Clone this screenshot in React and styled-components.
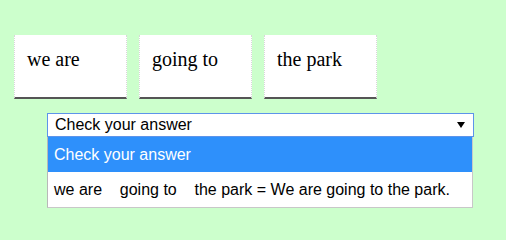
import React from "react";
import styled, { createGlobalStyle } from "styled-components";

const Global = createGlobalStyle`
  html, body { margin: 0; padding: 0; background: #ccffcc; }
  * { box-sizing: border-box; }
`;

const Page = styled.div`
  min-height: 234px;
  background: #ccffcc;
  padding: 35px 0 0 14px;
`;

const WordRow = styled.div`
  display: flex;
  gap: 12px;
`;

const WordCard = styled.div`
  width: 113px;
  height: 64px;
  background: #ffffff;
  border-left: 1px dotted #d8d8d8;
  border-right: 1px dotted #d8d8d8;
  border-bottom: 2px solid #555555;
  padding: 13px 12px 0 12px;
  font-family: "Liberation Serif", "Times New Roman", serif;
  font-size: 20px;
  color: #000;
  line-height: normal;
`;

const AnswerArea = styled.div`
  margin: 14px 0 0 33px;
  width: 427px;
  font-family: "Liberation Sans", Arial, sans-serif;
  font-size: 16px;
`;

const SelectBox = styled.div`
  height: 24px;
  border: 1px solid #5d94ea;
  background: #fff;
  display: flex;
  align-items: center;
  justify-content: space-between;
  padding: 0 8px 0 7px;
  color: #000;
`;

const OptionList = styled.div`
  width: 426px;
  border-left: 1px solid #b8b8b8;
  border-right: 1px solid #c8c8c8;
  border-bottom: 1px solid #c8c8c8;
  background: #fff;
`;

const Option = styled.div`
  height: 35px;
  display: flex;
  align-items: center;
  padding-left: 6px;
  white-space: pre;
  background: ${(p) => (p.$selected ? "#2e90fb" : "#ffffff")};
  color: ${(p) => (p.$selected ? "#ffffff" : "#000000")};
`;

const Arrow = () => (
  <svg width="8" height="6" viewBox="0 0 8 6" style={{ display: "block" }}>
    <polygon points="0,0 8,0 4,6" fill="#000" />
  </svg>
);

const words = ["we are", "going to", "the park"];

export default function App() {
  return (
    <Page>
      <Global />
      <WordRow>
        {words.map((w) => (
          <WordCard key={w}>{w}</WordCard>
        ))}
      </WordRow>
      <AnswerArea>
        <SelectBox>
          <span>Check your answer</span>
          <Arrow />
        </SelectBox>
        <OptionList>
          <Option $selected>Check your answer</Option>
          <Option>{"we are    going to    the park = We are going to the park."}</Option>
        </OptionList>
      </AnswerArea>
    </Page>
  );
}
